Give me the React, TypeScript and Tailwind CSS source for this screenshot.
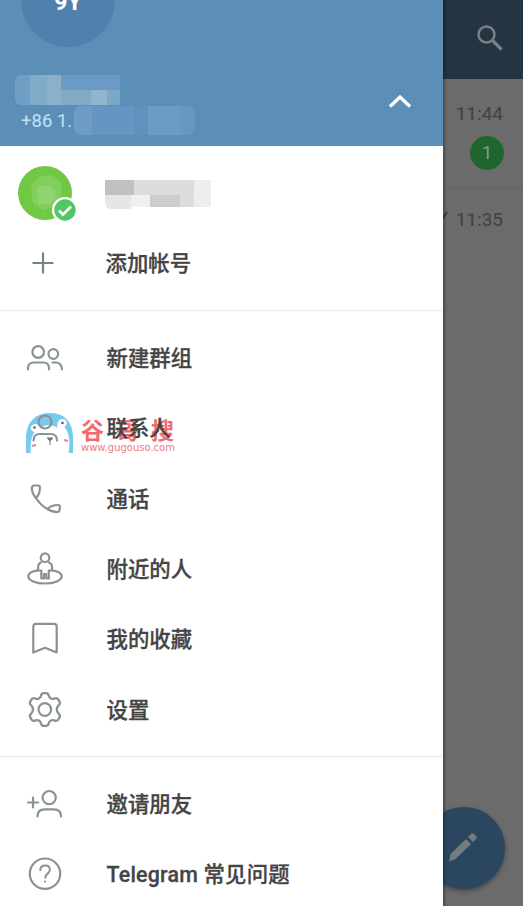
import React from "react";

const iconClass = "block shrink-0 overflow-visible";

function Icon({ children }: { children: React.ReactNode }) {
  return (
    <svg
      className={iconClass}
      width="40"
      height="40"
      viewBox="0 0 40 40"
      fill="none"
      stroke="#8b9292"
      strokeWidth="2.200"
      strokeLinecap="round"
      strokeLinejoin="round"
    >
      {children}
    </svg>
  );
}

const GroupIcon = () => (
  <Icon>
    <circle cx="13.200" cy="14" r="5.800" />
    <path d="M3 31.500v-1.500c0-3.500 2.500-5.500 6-5.500h9c3.500 0 6 2 6 5.500v1.500" />
    <circle cx="28.300" cy="16" r="4.800" />
    <path d="M27.500 24.500h3.500c3 0 6 2.500 6 7" />
  </Icon>
);

const ContactIcon = () => (
  <Icon>
    <circle cx="20" cy="14" r="6.500" />
    <path d="M8.500 32.500c0-4.500 2.500-6.500 6.500-6.500h10.500c4 0 6.500 2 6.500 6.500" />
  </Icon>
);

const PhoneIcon = () => (
  <Icon>
    <path d="M7 8c.3-1 1-1.500 2-1.500h4c1.300 0 1.900.8 1.900 2 0 4.500-1.200 8-4 10.500C8 15.500 6.500 11.500 7 8zM10.900 19c3.300 5 6.800 8.500 11.500 11 2.600-2.800 6.600-4 11-4 1.100 0 1.600.8 1.500 2l-.4 3.300c-.2 1.200-1 1.800-2.200 1.700-3.700-.1-7-.9-9.900-3" />
  </Icon>
);

const NearbyIcon = () => (
  <Icon>
    <circle cx="20" cy="8.700" r="4.300" />
    <path d="M16 13.500c-1.800.7-2.900 2.300-2.900 4.500v3.500h3.200V29.500h2.600v-4.500h2.300v4.500h2.600v-8H27V18c0-2.200-1.200-3.800-3-4.500" />
    <path d="M13 21.300c-5.500.8-9.700 3-9.700 6 0 4 7.500 7.200 16.700 7.200s16.700-3.200 16.700-7.200c0-3-4.200-5.200-9.700-6" />
  </Icon>
);

const BookmarkIcon = () => (
  <Icon>
    <path d="M8.300 33.500V7.500c0-1.800.9-2.700 2.700-2.700h18c1.800 0 2.700.9 2.700 2.700v26L20 28.800z" />
  </Icon>
);

const GearIcon = () => (
  <Icon>
    <circle cx="19.800" cy="19.500" r="6.300" />
    <path
      transform="translate(-1.300 -1.500) scale(1.060 1.050)"
      d="M16.300 6.800c.4-1.600 1.100-2.400 2.600-2.400h2.200c1.500 0 2.200.8 2.600 2.400.6 2.600 2.800 3.700 5.100 2.800 1.700-.7 2.900-.6 3.800.8l1.200 2.100c.8 1.400.5 2.500-.9 3.600-2.200 1.900-2.200 5.900 0 7.800 1.400 1.100 1.700 2.200.9 3.600l-1.200 2.100c-.9 1.400-2.100 1.500-3.800.8-2.300-.9-4.500.2-5.100 2.800-.4 1.600-1.100 2.400-2.600 2.400h-2.200c-1.500 0-2.200-.8-2.600-2.400-.6-2.600-2.800-3.700-5.100-2.800-1.700.7-2.900.6-3.800-.8l-1.200-2.100c-.8-1.400-.5-2.500.9-3.600 2.200-1.900 2.200-5.900 0-7.800-1.400-1.100-1.700-2.200-.9-3.600l1.200-2.100c.9-1.400 2.100-1.500 3.800-.8 2.300.9 4.500-.2 5.100-2.800z"
    />
  </Icon>
);

const InviteIcon = () => (
  <Icon>
    <path d="M3 18.500h10M8 13.500v10" />
    <circle cx="24.200" cy="13.600" r="6.600" />
    <path d="M12.500 32.500c0-5 2.500-7.200 7-7.200h9.500c4.500 0 7 2.200 7 7.200" />
  </Icon>
);

const HelpIcon = () => (
  <Icon>
    <circle cx="20" cy="19.700" r="15.200" />
    <path d="M15.300 16.200c0-3 2-4.700 4.800-4.700s4.800 1.700 4.800 4.300c0 3.800-4.700 3.900-4.700 7.900M20.100 27.500v.2" strokeWidth="2" />
  </Icon>
);

function Watermark() {
  return (
    <div className="absolute left-[25px] top-[19px] flex h-[42px] w-[154px] items-start">
      <svg width="50" height="42" viewBox="0 0 50 42" className="block shrink-0">
        <path d="M1 41V24C2 9 11 1 25 1s22 8 23 23v17z" fill="#79caef" />
        <path d="M6 42c-1-9 0-17 3.500-22-4-1-5-5-2-7s6-1 8 3c6-4 11-4 17 0-1-5 1-9 5-9s6 5 2 8c5 6 6 16 4 27z" fill="#fff" />
        <circle cx="9.500" cy="15.500" r="1.300" fill="#4a6473" />
        <circle cx="37.500" cy="11" r="1.300" fill="#4a6473" />
        <path d="M22 26h6l-3 3zM25 29v4" fill="#777" stroke="#777" />
        <path d="M7 34l4-1M39 28l4 1" stroke="#c98ca8" strokeWidth="2" />
      </svg>
      <div className="ml-[6px] mt-px flex flex-col font-['Noto_Sans_CJK_SC',sans-serif]">
        <div className="flex h-[28px] items-center gap-[12px] pt-[3px] text-[23px] font-bold leading-[26px] text-[#f26b6f]">
          <span>谷</span>
          <span>哥</span>
          <span>搜</span>
        </div>
        <div className="mt-[2px] h-[10px] whitespace-nowrap font-['DejaVu_Sans',sans-serif] text-[10px] font-normal leading-[10px] text-[#ee7c80]">
          www.gugouso.com
        </div>
      </div>
    </div>
  );
}

function MenuRow({ icon, label, marked = false }: { icon: React.ReactNode; label: string; marked?: boolean }) {
  return (
    <div className="relative flex h-[70.300px] items-center pl-[25px]">
      {marked && <Watermark />}
      <div className="relative">{icon}</div>
      <span className="relative ml-[41.500px] whitespace-nowrap pt-[2px] text-[21.400px] leading-[30px] [-webkit-text-stroke:0.3px_#444444]">
        {label}
      </span>
    </div>
  );
}

function Header() {
  return (
    <header className="h-[146px] overflow-hidden bg-[#5c8fb8]">
      <div className="-mt-[47px] ml-[21px] flex size-[94px] items-center justify-center rounded-full bg-[#4e82ac]">
        <span className="mt-[5px] text-[23px] font-bold leading-[26px] text-white">9Y</span>
      </div>
      <div className="mt-[28px] flex h-[71px] justify-between">
        <div>
          <div className="ml-[15px] flex h-[30px] w-[105px] overflow-hidden rounded-l-md bg-[#6b9bc4]">
            <div className="w-[15px] bg-[#6f9fc4]" />
            <div className="w-[17px] bg-[#82abc9]" />
            <div className="w-[14px] bg-[#8cb0ca]" />
            <div className="mt-[15px] w-[30px] bg-[#82aac4]" />
            <div className="mt-[15px] w-[16px] bg-[#91b5cc]" />
            <div className="mt-[15px] flex-1 bg-[#7ca8c8]" />
          </div>
          <div className="flex h-[30px] items-center">
            <span className="ml-[21px] w-[53px] whitespace-nowrap pt-[2px] text-[18.500px] font-normal leading-[22px] text-[#c1e1f8]">+86 1.</span>
            <div className="flex h-[29px] w-[121px] overflow-hidden rounded-lg bg-[#6698c2]">
              <div className="w-[18px] bg-[#6d9dc6]" />
              <div className="w-[42px] bg-[#6496c1]" />
              <div className="w-[14px] bg-[#5f92bc]" />
              <div className="w-[33px] bg-[#6b9cc4]" />
            </div>
          </div>
        </div>
        <svg width="24" height="16" viewBox="0 0 24 16" fill="none" className="mr-[31px] mt-[18px] block">
          <path d="M2 13.500 12 4 22 13.500" stroke="#fff" strokeWidth="3.200" />
        </svg>
      </div>
    </header>
  );
}

function Accounts() {
  return (
    <section className="h-[165px] border-b border-[#ececec] pt-[12px]">
      <div className="flex h-[70px] items-center pl-[18px]">
        <div className="relative size-[54px] shrink-0 overflow-visible rounded-full bg-[#70c844]">
          <svg width="60" height="58" viewBox="0 0 60 58" className="block overflow-visible">
            <path d="M13 20 22 10l12-1 9 8 1 12-6 11-13 4-10-7z" fill="#83cf5d" />
            <path d="M19 20h14l6 9-6 9H20z" fill="#8fd46d" />
            <circle cx="47" cy="44" r="13" fill="#fff" />
            <circle cx="47" cy="44" r="10.700" fill="#4fc765" />
            <path d="m41 44.500 4 4 8-8" fill="none" stroke="#fff" strokeWidth="2.700" />
          </svg>
        </div>
        <div className="ml-[33px] mt-[2px] h-[29px] w-[106px]">
          <div className="flex h-[15px]">
            <div className="w-[29px] bg-[#c1c1c1]" />
            <div className="w-[60px] bg-[#dddddd]" />
            <div className="w-[17px] bg-[#eeeeee]" />
          </div>
          <div className="flex h-[12px]">
            <div className="h-[14px] w-[26px] rounded-bl-md bg-[#e6e6e6]" />
            <div className="w-[19px] bg-[#f0f0f0]" />
            <div className="w-[30px] bg-[#cdcdcd]" />
            <div className="w-[14px] bg-[#dddddd]" />
            <div className="w-[17px] bg-[#ededed]" />
          </div>
        </div>
      </div>
      <div className="flex h-[70px] items-center pl-[32px]">
        <svg width="22" height="22" viewBox="0 0 22 22" className="block">
          <path d="M.500 11h21M11 .500v21" stroke="#788282" strokeWidth="2.200" />
        </svg>
        <span className="ml-[51.500px] pt-[2px] text-[21.400px] leading-[30px] [-webkit-text-stroke:0.3px_#444444]">添加帐号</span>
      </div>
    </section>
  );
}

function ChatBackdrop() {
  return (
    <aside className="relative flex-1 overflow-hidden bg-[#6b6b6b] font-['Roboto',sans-serif] text-[#414141]">
      <div className="flex h-[79px] justify-end bg-[#243441] pr-[19px] pt-[24px]">
        <svg width="28" height="28" viewBox="0 0 28 28" fill="none" stroke="#798188" className="block">
          <circle cx="10.500" cy="10.500" r="8" strokeWidth="2.500" />
          <path d="m16.500 16.500 9 9" strokeWidth="3.200" />
        </svg>
      </div>
      <div className="flex h-[109px] flex-col items-end border-b border-[#636363] pr-[20px] pt-[24px]">
        <span className="text-[19px] leading-[22px]">11:44</span>
        <span className="mt-[11px] -mr-px flex size-[34px] items-center justify-center rounded-full bg-[#1e662e] text-[19px] text-[#8a958b]">1</span>
      </div>
      <div className="flex justify-end pr-[20px] pt-[21px] text-[19px] leading-[22px]">11:35</div>
      <svg width="6" height="16" viewBox="0 0 6 16" className="absolute left-0 top-[211px]">
        <path d="m0 7 4-6" stroke="#3a3a3a" strokeWidth="2" />
      </svg>
      <div className="absolute -left-[20px] top-[807px] size-[82px] rounded-full bg-[#2a475f] shadow-[0_2px_4px_#444]">
        <svg width="82" height="82" viewBox="0 0 82 82" fill="#747c82" className="block">
          <path d="m27.500 47 15.500-15 5 5-15.500 15-6.500 2.500zM45 30l3-3c1-1 2-1 3 0l2 2c1 1 1 2 0 3l-3 3z" />
        </svg>
      </div>
      <div className="absolute inset-y-0 left-0 w-[4px] bg-gradient-to-r from-black/30 to-transparent" />
    </aside>
  );
}

export default function App() {
  return (
    <div className="flex h-[906px] w-[523px] overflow-hidden bg-white">
      <main className="w-[443px] shrink-0 overflow-hidden bg-white font-['Roboto','Noto_Sans_CJK_SC',sans-serif] font-medium text-[#444444]">
        <Header />
        <Accounts />
        <nav className="h-[446px] border-b border-[#e5e5e5] pt-[12px]">
          <MenuRow icon={<GroupIcon />} label="新建群组" />
          <MenuRow icon={<ContactIcon />} label="联系人" marked />
          <MenuRow icon={<PhoneIcon />} label="通话" />
          <MenuRow icon={<NearbyIcon />} label="附近的人" />
          <MenuRow icon={<BookmarkIcon />} label="我的收藏" />
          <MenuRow icon={<GearIcon />} label="设置" />
        </nav>
        <nav className="pt-[12px]">
          <MenuRow icon={<InviteIcon />} label="邀请朋友" />
          <div className="tracking-[0.2px]">
            <MenuRow icon={<HelpIcon />} label="Telegram 常见问题" />
          </div>
        </nav>
      </main>
      <ChatBackdrop />
    </div>
  );
}
